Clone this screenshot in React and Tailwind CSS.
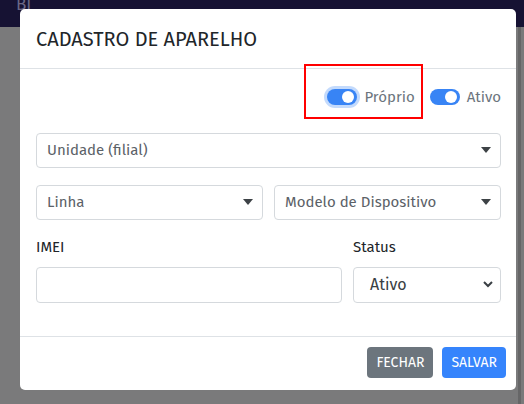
import React from 'react'

const font = { fontFamily: '"Fira Sans", Lato, "Noto Sans", sans-serif' }

function Toggle({ label, focus }) {
  return (
    <label className="flex items-center gap-[7px]">
      <span
        className={
          'relative flex h-[16px] w-[30px] items-center rounded-full bg-[#3884f5] ' +
          (focus ? 'shadow-[0_0_0_3px_rgba(56,132,245,0.3)]' : '')
        }
      >
        <span className="absolute right-[3px] h-[12px] w-[12px] rounded-full bg-white" />
      </span>
      <span className="text-[15px] text-[#6c757d]">{label}</span>
    </label>
  )
}

function Select({ label, className = '' }) {
  return (
    <div
      className={
        'flex h-[35px] items-center justify-between rounded-[4px] border border-[#d5d9dd] bg-white pl-[10px] pr-[9px] ' +
        className
      }
    >
      <span className="text-[15px] text-[#5b6167]">{label}</span>
      <svg width="10" height="6" viewBox="0 0 10 6">
        <path d="M0 0h10L5 6z" fill="#3d4246" />
      </svg>
    </div>
  )
}

export default function App() {
  return (
    <div className="relative h-[404px] w-[524px] overflow-hidden bg-[#7a7a7b]" style={font}>
      <div className="h-[27px] bg-[#161233] px-[16px]">
        <span className="relative top-[-7px] text-[17px] leading-[20px] text-[#6b6887]">BI</span>
      </div>
      <div className="absolute right-[3px] top-[27px] h-[377px] w-[3px] bg-[#666667]" />

      {/* modal */}
      <div className="absolute left-[20px] top-[9px] flex h-[381px] w-[496px] flex-col rounded-[5px] bg-white">
        <div className="flex h-[60px] items-center border-b border-[#dee2e6] px-[16px]">
          <h5 className="text-[20px] text-[#212529]">CADASTRO DE APARELHO</h5>
        </div>

        <div className="flex flex-1 flex-col px-[16px] pr-[15px]">
          <div className="flex justify-end pt-[17px]">
            <div className="relative flex items-center gap-[15px]">
              <div className="absolute left-[-23px] top-[-22px] h-[55px] w-[119px] border-2 border-[#ff0000]" />
              <Toggle label="Próprio" focus />
              <Toggle label="Ativo" />
            </div>
          </div>

          <Select label="Unidade (filial)" className="mt-[24px]" />

          <div className="mt-[17px] flex gap-[11px]">
            <Select label="Linha" className="flex-1" />
            <Select label="Modelo de Dispositivo" className="flex-1" />
          </div>

          <div className="mt-[16px] flex gap-[11px]">
            <div className="flex flex-1 flex-col">
              <span className="text-[15px] leading-[22px] text-[#212529]">IMEI</span>
              <div className="mt-[9px] h-[36px] rounded-[4px] border border-[#d5d9dd] bg-white" />
            </div>
            <div className="flex w-[148px] flex-col">
              <span className="text-[15px] leading-[22px] text-[#212529]">Status</span>
              <div className="mt-[9px] flex h-[36px] items-center justify-between rounded-[4px] border border-[#d5d9dd] bg-white pl-[16px] pr-[7px]">
                <span className="text-[16px] text-[#3a3f44]">Ativo</span>
                <svg width="10" height="7" viewBox="0 0 10 7">
                  <path d="M1 1l4 4 4-4" fill="none" stroke="#3a3f44" strokeWidth="2" />
                </svg>
              </div>
            </div>
          </div>
        </div>

        <div className="flex h-[54px] items-center justify-end gap-[9px] border-t border-[#dee2e6] px-[10px] pb-[2px]">
          <button className="h-[31px] rounded-[4px] bg-[#6c757d] px-[9px] text-[14px] text-white">
            FECHAR
          </button>
          <button className="h-[31px] rounded-[4px] bg-[#3584fc] px-[9px] text-[14px] text-white">
            SALVAR
          </button>
        </div>
      </div>
    </div>
  )
}
